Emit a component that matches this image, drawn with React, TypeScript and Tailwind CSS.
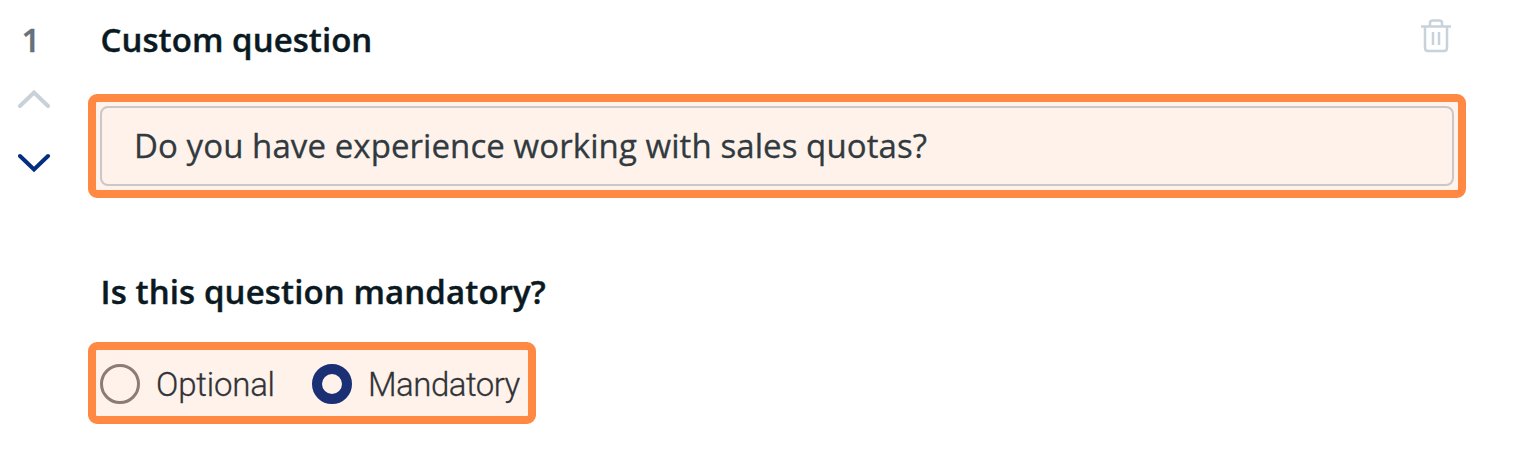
export default function App() {
  return (
    <main className="flex h-[472px] w-full overflow-hidden bg-white font-['Open_Sans',sans-serif] text-[#0b1a22]">
      <div className="flex w-[88px] shrink-0 flex-col pl-[18px] pt-[18px]">
        <span className="pl-[3.5px] text-[33px] font-semibold leading-[44px] text-[#65717b] [-webkit-text-stroke:0.4px]">1</span>
        <button aria-label="Move up" className="mt-[27px] h-[20px] w-[32px]">
          <svg width="32" height="20" viewBox="0 0 32 20" fill="none" stroke="#c8d2da" strokeWidth="4" strokeLinecap="round"><path d="M2 17 16 3.500l14 13.500" /></svg>
        </button>
        <button aria-label="Move down" className="mt-[44px] h-[20px] w-[32px]">
          <svg width="32" height="20" viewBox="0 0 32 20" fill="none" stroke="#052e80" strokeWidth="4" strokeLinecap="round"><path d="M2 3 16 16.500 30 3" /></svg>
        </button>
      </div>
      <section className="flex w-[1378px] flex-col">
        <header className="flex h-[94px] items-start justify-between pl-[12.5px] pr-[14px] pt-[18px]">
          <h2 className="text-[33px] font-semibold leading-[44px] tracking-[0.05px] [-webkit-text-stroke:0.4px]">Custom question</h2>
          <button aria-label="Delete question">
            <svg width="32" height="36" viewBox="0 0 32 36" fill="none" stroke="#c8d2da" strokeWidth="2.5"><path d="M1 8.500h30M10 8V5q0-2.500 2.500-2.500h7Q22 2.500 22 5v3M5 8.500V30q0 3 3 3h16q3 0 3-3V8.500M13 14v13M19 14v13" /></svg>
          </button>
        </header>
        <div className="h-[104px] rounded-[9px] border-[8px] border-[#ff8843] bg-[#fff2ea] p-[4px]">
          <input aria-label="Question" defaultValue="Do you have experience working with sales quotas?" className="h-[80px] w-full rounded-[8px] border-2 border-[#cac7c9] bg-transparent px-[32px] pb-[2px] text-[33px] tracking-[0.08px] text-[#303a40] [-webkit-text-stroke:0.3px]" />
        </div>
        <h3 className="mt-[72px] pl-[12.5px] text-[33px] font-semibold leading-[44px] tracking-[0.11px] [-webkit-text-stroke:0.4px]">Is this question mandatory?</h3>
        <div className="mt-[28px] flex h-[82px] w-[448px] items-center rounded-[9px] border-[8px] border-[#ff8843] bg-[#fff2ea] pl-[4px] pt-[2px] font-[Roboto,sans-serif] text-[33px] font-light text-[#303337] [-webkit-text-stroke:0.3px]">
          <span className="h-[40px] w-[40px] shrink-0 rounded-full border-[3px] border-[#8b7d73]" />
          <span className="ml-[16px] w-[118px] pt-[2px] tracking-[-0.200px]">Optional</span>
          <span className="ml-[38px] h-[40px] w-[40px] shrink-0 rounded-full border-[10px] border-[#1a2f74]" />
          <span className="ml-[16px] pt-[2px] tracking-[-0.500px]">Mandatory</span>
        </div>
      </section>
    </main>
  );
}
